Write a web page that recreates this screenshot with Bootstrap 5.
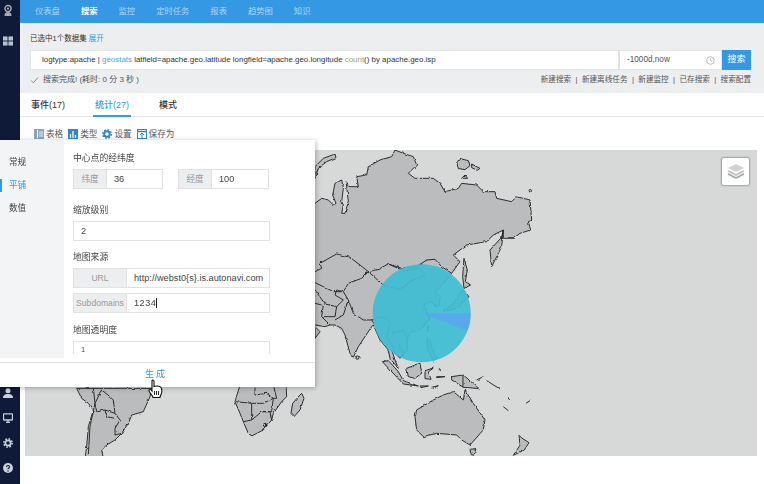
<!DOCTYPE html>
<html lang="zh-CN">
<head>
  <meta charset="UTF-8">
  <meta name="viewport" content="width=device-width, initial-scale=1">
  <title>搜索</title>
  <link href="https://cdn.jsdelivr.net/npm/bootstrap@5.3.3/dist/css/bootstrap.min.css" rel="stylesheet">
  <style>
    html, body { height: 484px; overflow: hidden; }
    body { font-family: "Liberation Sans", "Noto Sans CJK SC", sans-serif; font-size: 8px; color: #333; background: #fff; }
    .rail { width: 20px; height: 484px; background: #0f1a38; flex: none; padding-right: 5px; }
    .rail-icon { height: 25px; }
    .top-strip { height: 23px; background: #3498e5; padding-left: 15px; gap: 21px; }
    .top-strip .nav-link { padding: 0; font-size: 8.3px; color: rgba(255,255,255,.62); }
    .top-strip .nav-link.active { color: #fff; font-weight: 700; }
    .search-band { height: 70px; background: #eceef0; padding: 11px 13px 0 10px; }
    .set-line { font-size: 7.5px; line-height: 9px; color: #333; height: 16px; }
    .blue-text { color: #3498e5; }
    .query-row { height: 20px; }
    .query-box { flex: 1; height: 20px; background: #fff; border: 1px solid #e2e4e6; padding: 0 0 0 11px; font-size: 7.92px; line-height: 18px; color: #333; white-space: nowrap; overflow: hidden; }
    .geo-word { color: #45a9df; }
    .fn-word { color: #a49a6e; }
    .time-box { width: 103px; height: 20px; background: #fff; border: 1px solid #e2e4e6; border-left: 1px solid #dcdee0; padding: 0 6px 0 7px; font-size: 8.2px; color: #555; }
    .go-btn { width: 29px; height: 20px; padding: 0; background: #3498e5; border: 0; border-radius: 0; font-size: 9px; color: #fff; }
    .status-row { height: 20px; font-size: 8px; color: #555; }
    .status-row .links { font-size: 7.6px; color: #555; word-spacing: 2.3px; }
    .tab-row { height: 24px; border-bottom: 1px solid #e8e8e8; padding-left: 11px; gap: 30px; }
    .tab-row .nav-link { padding: 0; height: 24px; line-height: 24px; font-size: 9px; color: #333; font-weight: 500; }
    .tab-row .nav-link.active { color: #3498e5; border-bottom: 2px solid #3498e5; padding: 0 2px; margin: 0 -2px; }
    .tool-row { height: 33px; padding: 1px 0 0 14px; font-size: 8.6px; color: #555; }
    .tool-row span { margin: 0 5px 0 2px; }
    .map-wrap { width: 732px; height: 306px; margin-left: 5px; background: #d7d9d9; position: relative; }
    .map-wrap svg.world { display: block; }
    .layer-btn { position: absolute; top: 7px; right: 7px; width: 29px; height: 29px; background: #fff; border: 1px solid #aaa; border-radius: 3px; box-shadow: 0 0 0 1px rgba(0,0,0,.06); }
    .land { fill: #bbbcbe; stroke: #26282a; stroke-width: 2.9; stroke-linejoin: round; }
    .line { fill: none; stroke: #26282a; stroke-width: 2.9; stroke-linejoin: round; }
    .pop-panel { position: absolute; left: 0; top: 140px; width: 315px; height: 247px; background: #fff; box-shadow: 1px 1px 5px rgba(0,0,0,.28); z-index: 5; }
    .pop-side { width: 64px; height: 218px; background: #f2f4f6; font-size: 8.6px; padding-top: 14px; }
    .pop-side div { height: 23px; line-height: 17px; padding-left: 9px; color: #444; position: relative; }
    .pop-side .on { color: #3498e5; }
    .pop-side .on::before { content: ""; position: absolute; left: 0; top: 2px; width: 2px; height: 13px; background: #3498e5; }
    .pop-form { width: 248px; height: 214px; margin-bottom: 8px; padding: 12px 0 0 9px; overflow: hidden; }
    .pop-form .field-title { font-size: 8.8px; line-height: 12px; color: #444; margin-bottom: 5px; }
    .pop-form .input-group { height: 20px; flex-wrap: nowrap; }
    .pop-form .input-group-text { height: 20px; padding: 0; justify-content: center; background: #eceef0; border: 1px solid #e0e2e4; border-radius: 0; font-size: 8.6px; color: #999; }
    .pop-form .form-control { height: 20px; min-height: 0; padding: 0 7px; border: 1px solid #e0e2e4; border-radius: 0; font-size: 9.2px; line-height: 18px; color: #444; white-space: nowrap; overflow: hidden; }
    .pop-form .form-control.cut-field { width: 197px; height: 13px; padding-top: 3px; border-bottom: 0; font-size: 7.5px; line-height: 9px; }
    .pop-foot { height: 25px; border-top: 1px solid #e0e0e0; font-size: 9px; letter-spacing: 2px; color: #3498e5; position: relative; }
    .hand-mark { position: absolute; left: 148px; top: 16px; z-index: 6; }
    .caret-mark { border-right: 1px solid #222; letter-spacing: .5px; }
  </style>
</head>
<body class="d-flex">

<aside class="rail d-flex flex-column align-items-center">
  <div class="rail-icon d-flex align-items-center justify-content-center" style="height:20px">
    <svg width="10" height="13" viewBox="0 0 13 16"><circle cx="6.5" cy="5.5" r="4" fill="none" stroke="#a5a8b0" stroke-width="1.8"/><circle cx="6.5" cy="5.5" r="1.5" fill="#a5a8b0"/><path d="M2 15c0-4 2-5 4.500-5s4.500 1 4.500 5z" fill="#a5a8b0"/></svg>
  </div>
  <div class="rail-icon d-flex align-items-center justify-content-center" style="margin-top:8px">
    <svg width="10" height="10" viewBox="0 0 11 10" fill="#b8c2cf"><rect width="5" height="4.500"/><rect x="6" width="5" height="4.500"/><rect y="5.500" width="5" height="4.500"/><rect x="6" y="5.500" width="5" height="4.500"/></svg>
  </div>
  <div class="flex-grow-1"></div>
  <div class="rail-icon d-flex align-items-center justify-content-center">
    <svg width="10" height="10" viewBox="0 0 10 10" fill="#c8d0da"><circle cx="5" cy="2.800" r="2.500"/><path d="M0 10c0-3 2-4 5-4s5 1 5 4z"/></svg>
  </div>
  <div class="rail-icon d-flex align-items-center justify-content-center">
    <svg width="10" height="10" viewBox="0 0 10 10"><rect x=".5" y=".8" width="9" height="6.200" rx=".6" fill="none" stroke="#c8d0da" stroke-width="1.300"/><path d="M3 9.500h4M5 7v2.500" stroke="#c8d0da" stroke-width="1.300"/></svg>
  </div>
  <div class="rail-icon d-flex align-items-center justify-content-center">
    <svg width="10" height="10" viewBox="0 0 10 10"><circle cx="5" cy="5" r="2.700" fill="none" stroke="#c8d0da" stroke-width="1.800"/><circle cx="5" cy="5" r="4.200" fill="none" stroke="#c8d0da" stroke-width="1.500" stroke-dasharray="1.650 1.650"/></svg>
  </div>
  <div class="rail-icon d-flex align-items-center justify-content-center" style="margin-bottom:4px">
    <svg width="10" height="10" viewBox="0 0 10 10"><circle cx="5" cy="5" r="5" fill="#c8d0da"/><path d="M3.500 4c0-2 3-2 3 0 0 1-1.500 1-1.500 2.200" fill="none" stroke="#0f1a38" stroke-width="1.100"/><circle cx="5" cy="8" r=".7" fill="#0f1a38"/></svg>
  </div>
</aside>

<main class="flex-grow-1">
  <nav class="nav top-strip align-items-center">
    <a class="nav-link" href="#">仪表盘</a>
    <a class="nav-link active" href="#">搜索</a>
    <a class="nav-link" href="#">监控</a>
    <a class="nav-link" href="#">定时任务</a>
    <a class="nav-link" href="#">报表</a>
    <a class="nav-link" href="#">趋势图</a>
    <a class="nav-link" href="#">知识</a>
  </nav>

  <section class="search-band">
    <div class="set-line">已选中1个数据集 <span class="blue-text">展开</span></div>
    <div class="query-row d-flex">
      <div class="query-box">logtype:apache | <span class="geo-word">geostats</span> latfield=apache.geo.latitude longfield=apache.geo.longitude <span class="fn-word">count</span>() by apache.geo.isp</div>
      <div class="time-box d-flex align-items-center justify-content-between">
        <span>-1000d,now</span>
        <svg width="9" height="9" viewBox="0 0 9 9"><circle cx="4.500" cy="4.500" r="3.800" fill="none" stroke="#aaa" stroke-width=".8"/><path d="M4.500 2.200v2.500l1.700 1" fill="none" stroke="#aaa" stroke-width=".8"/></svg>
      </div>
      <button class="btn go-btn" type="button">搜索</button>
    </div>
    <div class="status-row d-flex align-items-center justify-content-between">
      <span><svg width="9" height="8" viewBox="0 0 9 8" class="me-1"><path d="M1 4.500l2.300 2.300L8 1.500" fill="none" stroke="#8a9178" stroke-width="1"/></svg>搜索完成! (耗时: 0 分 3 秒 )</span>
      <span class="links">新建搜索 | 新建离线任务 | 新建监控 | 已存搜索 | 搜索配置</span>
    </div>
  </section>

  <nav class="nav tab-row">
    <a class="nav-link" href="#">事件(17)</a>
    <a class="nav-link active" href="#">统计(27)</a>
    <a class="nav-link" href="#">模式</a>
  </nav>

  <div class="tool-row d-flex align-items-center">
    <svg width="10" height="10" viewBox="0 0 10 10"><rect width="10" height="10" fill="#8ba6bb"/><path d="M3.500 1v8" stroke="#fff"/><path d="M5 3h4M5 5h4M5 7h4" stroke="#fff" stroke-width=".8"/></svg><span>表格</span>
    <svg width="10" height="10" viewBox="0 0 10 10"><rect width="10" height="10" fill="#2f86c8"/><path d="M2.500 9V5M5 9V2M7.500 9V6" stroke="#fff" stroke-width="1.300"/></svg><span>类型</span>
    <svg width="10" height="10" viewBox="0 0 10 10"><circle cx="5" cy="5" r="2.800" fill="none" stroke="#2f86c8" stroke-width="2"/><circle cx="5" cy="5" r="4.300" fill="none" stroke="#2f86c8" stroke-width="1.400" stroke-dasharray="1.700 1.670"/></svg><span>设置</span>
    <svg width="10" height="10" viewBox="0 0 10 10"><rect x=".5" y=".5" width="9" height="9" fill="none" stroke="#2f86c8"/><path d="M.5 2.500h9" stroke="#2f86c8" stroke-width="1.500"/><path d="M5 9V4.500M3 6l2-2 2 2" fill="none" stroke="#2f86c8"/></svg><span>保存为</span>
  </div>

  <div class="map-wrap">
    <svg class="world" width="732" height="306" viewBox="25 150 732 306">
      <defs>
        <filter id="coastWobble" filterUnits="userSpaceOnUse" x="25" y="150" width="732" height="306">
          <feTurbulence type="fractalNoise" baseFrequency=".22" numOctaves="2" seed="4"/>
          <feDisplacementMap in="SourceGraphic" scale="2.600" xChannelSelector="R" yChannelSelector="G"/>
        </filter>
      </defs>
      <g filter="url(#coastWobble)">
      <!-- asia, europe edge, indonesia, australia traced at 3x -->
      <g transform="translate(320 150) scale(.3333)">
        <path class="land" d="M-30 160L-15 160 5 145 25 150 40 165 48 160 38 135 45 100 65 90 70 115 65 155 70 165 65 190 75 190 85 155 80 110 78 95 87 110 115 110 110 80 140 75 145 50 180 30 215 20 225 0 250 10 280 20 290 45 265 70 285 85 340 85 360 100 375 125 415 115 425 100 470 105 490 125 525 125 530 145 575 155 590 140 630 150 635 210 625 215 632 240 600 250 580 265 550 265 550 240 520 255 500 275 440 285 400 315 420 335 395 370 375 395 345 425 360 440 358 465 350 470 335 455 310 465 330 505 305 535 270 550 262 565 262 600 240 625 215 600 225 630 235 655 210 625 205 600 180 570 160 525 155 530 115 590 100 622 90 610 75 555 65 535 45 525 30 525 15 530 -15 525 -30 525Z"/>
        <path class="land" d="M-15 80L-15 50 10 25 45 12 48 23 20 35 -5 55 -15 85Z"/>
        <path class="land" d="M410 35l15-8 20 5 5 15-15 12-20-3ZM455 42l25 13-8 6-17-8ZM425 85l10-10 8 10Z"/>
        <path class="land" d="M627 122l4-5 4 5-4 6Z"/>
        <path class="land" d="M510 300L545 262 550 240 545 290 515 350Z"/>
        <path class="land" d="M432 325L442 360 436 395 452 405 432 415 428 380Z"/>
        <path class="land" d="M370 485L400 460 430 420 447 440 410 475Z"/>
        <path class="land" d="M322 530l5-2-5 18ZM320 565l10 5 5 25 15 30-10 8-15-30Z"/>
        <path class="land" d="M187 635L205 632 235 665 250 692 295 708 250 702 215 665Z"/>
        <path class="land" d="M260 655L300 640 305 670 285 685 265 680Z"/>
        <path class="land" d="M315 662l25-8-15 12 8 22-18-2Z"/>
        <path class="land" d="M350 680h25l-25 3ZM300 708h25l-22 5ZM335 712l20-5-15 8Z"/>
        <path class="land" d="M395 680L430 675 470 710 478 716 430 712 395 690Z"/>
        <path class="line" d="M429 675v37"/>
        <path class="line" d="M470 690l20-10M500 692l40 25M563 742l6 8M618 760l15-10M550 770l15 12M358 655v8"/>
        <path class="land" d="M285 800L290 780 340 750 370 735 400 725 430 750 435 720 460 760 495 810 490 840 450 885 425 870 410 855 350 850 310 860 290 840Z"/>
        <path class="land" d="M450 898l18-2-6 20-8-2Z"/>
        <path class="land" d="M597 856l8 8 22 14-14 22-33 16 20-30Z"/>
        <path class="line" d="M-15 365L5 355 0 340 50 312 90 322 120 345 145 365 175 358 205 342 245 355 290 350 320 330 345 328 365 350 395 370"/>
        <path class="line" d="M145 365L190 405 240 420 270 395 315 375 300 355 250 362 205 342"/>
        <path class="line" d="M-15 398L10 410 40 425 70 425 85 450 100 490 130 510 155 510 165 525"/>
        <path class="line" d="M145 365L125 385 85 400 70 425 50 420 45 435 70 450 50 470 15 462 -15 420"/>
        <path class="line" d="M10 465L5 500 30 525M50 470L45 500 10 500M45 510L70 495 85 450M-15 460L5 465"/>
        <path class="line" d="M155 510L185 500 205 510 210 525 200 560 225 600M235 580L255 610M215 550L250 540 262 565M305 535L330 505 310 465"/>
        <path class="land" d="M-15 530L0 545-15 565Z"/>
        <circle cx="112" cy="623" r="5" class="land"/>
      </g>
      <!-- south america -->
      <g transform="translate(60 380) scale(.3333)">
        <path class="land" d="M50 25L65 55 85 70 100 90 85 140 80 200 75 235 130 235 125 210 140 195 165 180 185 160 205 130 215 105 250 95 270 50 275 25Z"/>
        <path class="line" d="M100 25L105 70 90 140 85 225M125 30L105 70 110 95 135 90 165 100 180 120 165 145 165 165 185 160M135 90L140 110 165 115M160 60L150 50 125 30M160 60L165 100"/>
      </g>
      <!-- africa -->
      <g transform="translate(220 380) scale(.3333)">
        <path class="land" d="M60 15L45 65 60 100 70 125 85 160 95 168 130 150 155 120 160 100 185 65 200 50 198 15Z"/>
        <path class="line" d="M48 65L95 70 95 120 70 125M95 70L130 70 160 55 155 95 125 95 95 120M105 20L105 45 140 40 160 55M125 95L150 95 155 120M160 15L170 55 160 55"/>
        <path class="land" d="M245 40L252 55 240 90 222 110 213 100 218 70 240 45Z"/>
        <circle cx="135" cy="135" r="5" class="land"/>
      </g>
      </g>
      <!-- stats pie -->
      <circle cx="421.700" cy="313.300" r="49" fill="#3fbdd3" fill-opacity=".93"/>
      <path d="M421.700 313.300L470.700 313.300A49 49 0 0 1 467.500 330.700Z" fill="#58a8ec"/>
    </svg>
    <div class="layer-btn d-flex align-items-center justify-content-center">
      <svg width="18" height="17" viewBox="0 0 18 17"><path d="M1 10l8 4 8-4v2l-8 4-8-4z" fill="#a9abad"/><path d="M1 7l8 4 8-4v2l-8 4-8-4z" fill="#bdbfc1"/><path d="M1 5l8-4 8 4-8 4z" fill="#cfd1d3"/></svg>
    </div>
  </div>
</main>

<div class="pop-panel">
  <div class="d-flex">
    <div class="pop-side">
      <div>常规</div>
      <div class="on">平铺</div>
      <div>数值</div>
    </div>
    <div class="pop-form">
      <div class="field-title">中心点的经纬度</div>
      <div class="d-flex" style="gap:15px;margin-bottom:15px">
        <div class="input-group" style="width:90px">
          <span class="input-group-text" style="width:34px">纬度</span>
          <div class="form-control">36</div>
        </div>
        <div class="input-group" style="width:91px">
          <span class="input-group-text" style="width:34px">经度</span>
          <div class="form-control">100</div>
        </div>
      </div>
      <div class="field-title">缩放级别</div>
      <div class="form-control" style="width:197px;margin-bottom:10px">2</div>
      <div class="field-title">地图来源</div>
      <div class="input-group" style="width:197px;margin-bottom:5px">
        <span class="input-group-text" style="width:54px">URL</span>
        <div class="form-control">http://webst0{s}.is.autonavi.com</div>
      </div>
      <div class="input-group" style="width:197px;margin-bottom:11px">
        <span class="input-group-text" style="width:54px">Subdomains</span>
        <div class="form-control"><span class="caret-mark">1234</span></div>
      </div>
      <div class="field-title">地图透明度</div>
      <div class="form-control cut-field">1</div>
    </div>
  </div>
  <div class="pop-foot d-flex align-items-center justify-content-center">
    <span style="margin-right:3px">生成</span>
    <svg class="hand-mark" width="15" height="19" viewBox="0 0 15 19"><path d="M4 1.500c1-.8 2 0 2 1v5c2-1 6-.5 7 1 1 2 1 5 0 7-.5 1-1 2-1 3H5c-.5-2-2-3-3.500-5.500C.5 11.500 1 10.500 2 10.500c1 0 2 1.500 2 1.500z" fill="#fff" stroke="#111" stroke-width="1.100"/><path d="M6.500 12v4M8.500 12v4M10.500 12v4" stroke="#111" stroke-width=".9"/></svg>
  </div>
</div>

<script src="https://cdn.jsdelivr.net/npm/bootstrap@5.3.3/dist/js/bootstrap.bundle.min.js"></script>
</body>
</html>
